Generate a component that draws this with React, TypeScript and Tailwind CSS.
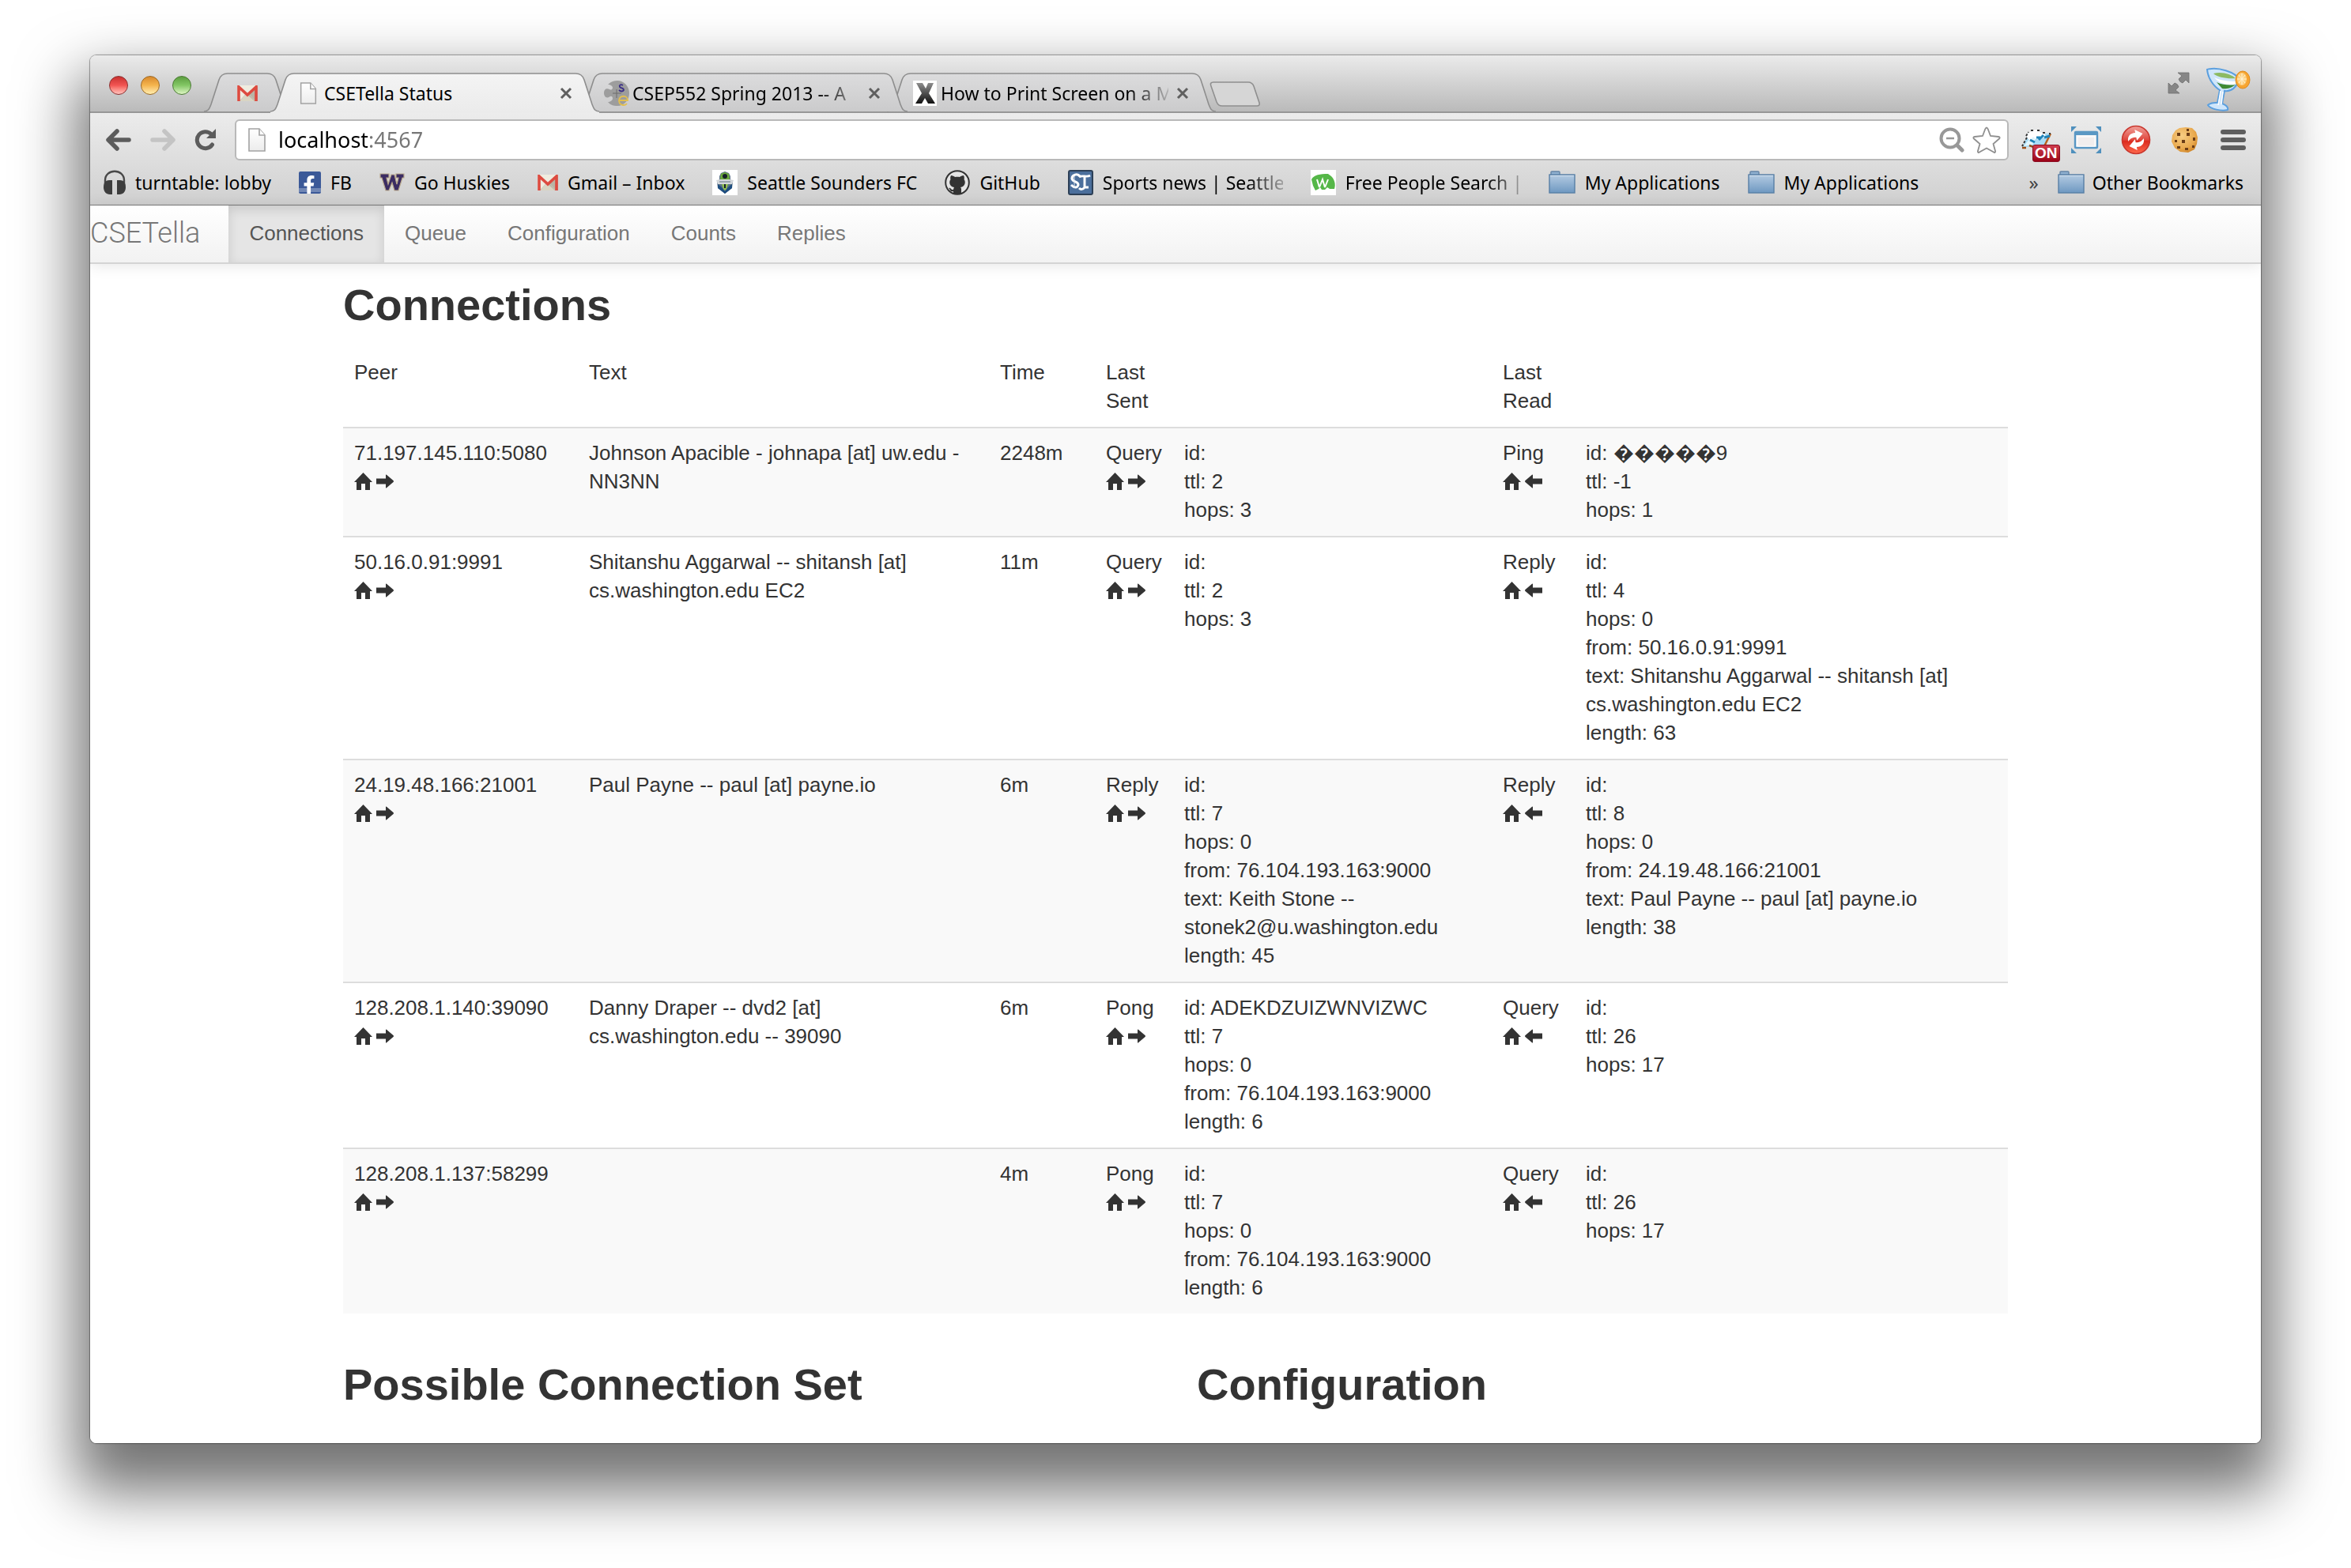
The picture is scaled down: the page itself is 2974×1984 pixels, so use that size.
import type { ReactNode } from "react";
import { FaFacebookF } from "react-icons/fa";

/* ---------- favicons and toolbar drawings ---------- */

function PageIcon({ className }: { className: string }) {
  return (
    <svg viewBox="0 0 22 30" className={className} aria-hidden="true">
      <defs>
        <linearGradient id="page" x1="0" y1="0" x2="0" y2="1">
          <stop offset="0" stopColor="#ffffff" />
          <stop offset="1" stopColor="#ececec" />
        </linearGradient>
      </defs>
      <path d="M1 1H14L21 9V29H1Z" fill="url(#page)" stroke="#a2a2a2" strokeWidth="1.6" />
      <path d="M14 1V9H21" fill="#fff" stroke="#a2a2a2" strokeWidth="1.6" />
    </svg>
  );
}

function GmailIcon() {
  return (
    <svg viewBox="0 0 26 20" className="h-5 w-[26px]" aria-hidden="true">
      <rect x="0" y="0" width="26" height="20" fill="#efece0" />
      <path d="M3 20L13 10L26 20Z" fill="#d9d5c3" />
      <path d="M13 12L26 1V20H22Z" fill="#b9b5a5" />
      <path d="M4 19L11 11M22 19L15 11" stroke="#c9c5b5" strokeWidth="1" />
      <path d="M2 20V2L13 12L24 2V20" fill="none" stroke="#dd4b40" strokeWidth="3.6" />
    </svg>
  );
}

function CseIcon() {
  return (
    <svg viewBox="0 0 32 32" className="size-8" aria-hidden="true">
      <path
        d="M5 5C9 1 13 0 17 0A15 16 0 0 1 17 32C12 32 8 31 5 27C8 27 11 25 11 22.500C11 20 9 19 7 20.500C3 23 0 20 0 15.500C0 11 3 9 7 11C9 12.500 11 11 11 9C11 7 8 5 5 5Z"
        fill="#9d9d9d"
      />
      <path d="M11 16H22M16 11V22" stroke="#6c6c6c" strokeWidth="1" />
      <path d="M24 6C21 4 19 6 20 8C21 10 25 9 25 12C24 14 21 14 19 12" fill="none" stroke="#3b2f86" strokeWidth="1.8" />
      <path d="M19 25H30C30 18 20 18 19 25C19 32 27 32 29 29" fill="none" stroke="#e3bf4f" strokeWidth="1.8" />
    </svg>
  );
}

function XIcon() {
  return (
    <svg viewBox="0 0 30 32" className="h-8 w-[30px]" aria-hidden="true">
      <defs>
        <linearGradient id="xg" x1="0" y1="0" x2="0" y2="1">
          <stop offset="0" stopColor="#8d8d8d" />
          <stop offset="1" stopColor="#111111" />
        </linearGradient>
      </defs>
      <rect width="30" height="32" fill="#fff" />
      <path d="M4 3H12L16 10L19 3H26L20 16L28 29H19L15 22L11 29H3L11 16Z" fill="url(#xg)" />
    </svg>
  );
}

function HeadphonesIcon() {
  return (
    <svg viewBox="0 0 28 32" className="h-8 w-7" aria-hidden="true">
      <path d="M2 20V13C2 -2 26 -2 26 13V20" fill="none" stroke="#474747" strokeWidth="2.4" />
      <path d="M11 13V31H8C3 31 0 27 0 22C0 16 3 13 7 13Z" fill="#3d3d3d" />
      <path d="M17 13V31H20C25 31 28 27 28 22C28 16 25 13 21 13Z" fill="#3d3d3d" />
    </svg>
  );
}

function FacebookIcon() {
  return (
    <span className="relative block size-7 overflow-hidden rounded-[2px] bg-[#3b5998]">
      <span className="absolute inset-x-0 bottom-[2px] h-[5px] bg-[#7187b5]" />
      <FaFacebookF className="absolute -bottom-px right-[3px] size-6 text-white" />
    </span>
  );
}

function HuskiesIcon() {
  return (
    <svg viewBox="0 0 32 24" className="h-6 w-8" aria-hidden="true">
      <path
        d="M1 1H12V6H9L11 14L15 2H19L22 14L24 6H21V1H31V6H29L24 22H19L16 12L12 22H8L3 6H1Z"
        fill="#3b2c63"
        stroke="#b9a98d"
        strokeWidth="1.2"
      />
    </svg>
  );
}

function SoundersIcon() {
  return (
    <svg viewBox="0 0 32 32" className="size-8" aria-hidden="true">
      <rect width="32" height="32" fill="#fff" />
      <path d="M11 4L16 2L21 4L23 8V12L26 15L25 23L16 30L7 23L6 15L9 12V8Z" fill="#5d7387" />
      <path d="M11 5L16 3L21 5L22 12H10Z" fill="#6cab3c" />
      <circle cx="16" cy="8" r="3" fill="#16202b" />
      <path d="M5 13L10 12H22L27 13L25 18H7Z" fill="#d3d7db" />
      <path d="M9 15H23" stroke="#8793a0" strokeWidth="1.5" />
      <path d="M7 18L12 22L16 27L20 22L25 18V23L16 30L7 23Z" fill="#1d4d80" />
      <path d="M12 18H20L18 24L16 26L14 24Z" fill="#8fbf4d" />
      <path d="M15 18H17V23H15Z" fill="#16202b" />
    </svg>
  );
}

function GithubIcon() {
  return (
    <svg viewBox="0 0 32 32" className="size-8" aria-hidden="true">
      <circle cx="16" cy="16" r="14.8" fill="#e4e4e4" stroke="#333" strokeWidth="2" />
      <path
        d="M8 7C10 7 12 8 13 9C15 8.500 17 8.500 19 9C20 8 22 7 24 7C25 9 25 11 24.500 12C27 15 26 21 20 22C21 23 21 24 21 25V30C18 31 14 31 11 30V27C8 28 7 26 6 24L5 23C8 22 8 26 11 25C11 24 11.500 23 12 22C6 21 5 15 7.500 12C7 11 7 9 8 7Z"
        fill="#333"
      />
    </svg>
  );
}

function SeattleTimesIcon() {
  return (
    <svg viewBox="0 0 32 32" className="size-8" aria-hidden="true">
      <rect x="1" y="1" width="30" height="30" rx="2" fill="#4b6f9c" stroke="#2c3f56" strokeWidth="2" />
      <path d="M15 8C12 4 5 6 5 11C6 16 13 14 13 19C12 23 8 23 4 19" fill="none" stroke="#fff" strokeWidth="3" />
      <path d="M14 9C18 6 23 10 28 7M21 9V22C19 25 16 25 14 23M21 22H26" fill="none" stroke="#fff" strokeWidth="3" />
      <path d="M8 8V23" stroke="#dfe7f0" strokeWidth="1" />
    </svg>
  );
}

function WhitepagesIcon() {
  return (
    <svg viewBox="0 0 32 32" className="size-8" aria-hidden="true">
      <rect width="32" height="32" fill="#fff" />
      <path d="M1 12C4 6 12 5 22 5L26 8C30 12 32 18 30 24L24 24L21 22L18 25H14L12 22L10 24L6 26L3 20Z" fill="#55b748" />
      <path d="M8 12L11 22M11 22L15 12L18 22M18 22L22 12" fill="none" stroke="#fff" strokeWidth="2" />
    </svg>
  );
}

function FolderIcon() {
  return (
    <svg viewBox="0 0 34 36" className="h-9 w-[34px]" aria-hidden="true">
      <defs>
        <linearGradient id="folder" x1="0" y1="0" x2="0" y2="1">
          <stop offset="0" stopColor="#b4cbe2" />
          <stop offset="1" stopColor="#6e98c1" />
        </linearGradient>
      </defs>
      <path d="M3 8V5Q3 4 4 4H13Q14 4 14 5V8" fill="#8fb0d0" stroke="#6485a6" strokeWidth="1.4" />
      <rect x="1" y="8" width="32" height="23" fill="url(#folder)" stroke="#587fa5" strokeWidth="1.4" />
      <path d="M2 9.500H32" stroke="#d3e1ef" strokeWidth="1" />
    </svg>
  );
}

function BackArrow({ className }: { className: string }) {
  return (
    <svg viewBox="0 0 32 28" className={className} aria-hidden="true">
      <path d="M14 3L3 14L14 25M4 14H29" fill="none" stroke="currentColor" strokeWidth="5.500" strokeLinecap="round" strokeLinejoin="round" />
    </svg>
  );
}

function ReloadIcon() {
  return (
    <svg viewBox="0 0 28 28" className="size-7" aria-hidden="true">
      <path d="M22.500 20A10.500 10.500 0 1 1 21 6.500" fill="none" stroke="#5c5c5c" strokeWidth="5" strokeLinecap="round" />
      <path d="M27 0V12H15Z" fill="#5c5c5c" />
    </svg>
  );
}

function ZoomOutIcon() {
  return (
    <svg viewBox="0 0 32 32" className="size-8" aria-hidden="true">
      <circle cx="14" cy="14" r="11.500" fill="none" stroke="#989898" strokeWidth="4" />
      <path d="M9 14H19" stroke="#989898" strokeWidth="2.400" />
      <path d="M23 23L29 29" stroke="#989898" strokeWidth="5" strokeLinecap="round" />
    </svg>
  );
}

function StarIcon() {
  return (
    <svg viewBox="0 0 36 34" className="h-[34px] w-9" aria-hidden="true">
      <path
        d="M18 1.500C19 1.500 19.500 3 20 4L23 12L33 13C35 13.200 35 14.500 34 15.500L26.500 22L29 31C29.500 33 28 33.500 27 32.500L18 27.500L9 32.500C8 33.500 6.500 33 7 31L9.500 22L2 15.500C1 14.500 1 13.200 3 13L13 12L16 4C16.500 3 17 1.500 18 1.500Z"
        fill="#fff"
        stroke="#8f8f8f"
        strokeWidth="1.800"
      />
    </svg>
  );
}

function CloudBookIcon() {
  return (
    <svg viewBox="0 0 38 28" className="h-7 w-[38px]" aria-hidden="true">
      <path d="M9 5L37 6L28 24H20L14 22L1 24Z" fill="#a9dcf5" />
      <path d="M11 12L19 11L14 20L3 22Z" fill="#e3f6fd" />
      <path d="M37 6L28 24" stroke="#b7611d" strokeWidth="2.500" />
      <path d="M1 24H6M10 21L18 24H28" fill="none" stroke="#9b4d17" strokeWidth="2.500" strokeDasharray="6 3" />
      <path d="M7 11C7 5 12 3 14 3C17 0 22 1 24 5C29 4 31 7 30 10L22 14L15 11L10 14Z" fill="#fff" />
      <path d="M7 11L1 22M6 9L9 4M12 2H15M20 2H23M27 5H30M35 6H37" stroke="#333" strokeWidth="2" strokeDasharray="3 2" />
      <path d="M11 14L17 17M22 14L28 8M19 11H24M29 11L36 9" stroke="#1f83b8" strokeWidth="3" />
    </svg>
  );
}

function WindowCaptureIcon() {
  return (
    <svg viewBox="0 0 38 34" className="h-[34px] w-[38px]" aria-hidden="true">
      <path d="M0 0H7L0 7ZM38 0H31L38 7ZM0 34H7L0 27ZM38 34H31L38 27Z" fill="#4f90bd" />
      <rect x="5" y="7" width="28" height="20" rx="1" fill="#f5f5f5" stroke="#5796c4" strokeWidth="2.400" />
      <path d="M5 6H33V11H5Z" fill="#5b98c4" />
      <rect x="8" y="13" width="22" height="12" fill="#f1eeee" stroke="#fff" strokeWidth="1" />
    </svg>
  );
}

function SyncBallIcon() {
  return (
    <svg viewBox="0 0 38 38" className="size-[38px]" aria-hidden="true">
      <defs>
        <linearGradient id="ball" x1="0" y1="0" x2="0" y2="1">
          <stop offset="0" stopColor="#f0a19b" />
          <stop offset="0.500" stopColor="#e0473d" />
          <stop offset="0.550" stopColor="#dc2b1f" />
          <stop offset="1" stopColor="#ff6a4d" />
        </linearGradient>
      </defs>
      <circle cx="19" cy="19" r="17.500" fill="url(#ball)" stroke="#c9372e" strokeWidth="1.600" />
      <g transform="rotate(-12 19 19)" fill="#fff">
        <path d="M9 19C9 12 14 9 20 10V6L29 13L20 20V16C15 15 12 16 9 19Z" />
        <path d="M29 19C29 26 24 29 18 28V32L9 25L18 18V22C23 23 26 22 29 19Z" />
      </g>
    </svg>
  );
}

function CookieIcon() {
  return (
    <svg viewBox="0 0 38 34" className="h-[34px] w-[38px]" aria-hidden="true">
      <defs>
        <radialGradient id="cookie" cx="0.400" cy="0.350" r="0.700">
          <stop offset="0" stopColor="#f7cd84" />
          <stop offset="0.700" stopColor="#e9a94e" />
          <stop offset="1" stopColor="#cf8426" />
        </radialGradient>
      </defs>
      <path d="M11 2L19 1L27 2L32 7L34 14L33 22L30 29L22 33L12 32L5 27L1 19L2 11L6 5Z" fill="url(#cookie)" />
      <g fill="#6b3d17">
        <rect x="8" y="8" width="4" height="4" />
        <rect x="20" y="3" width="3" height="3" />
        <rect x="20" y="8" width="4" height="4" />
        <rect x="14" y="17" width="4" height="4" />
        <rect x="28" y="14" width="3" height="4" />
        <rect x="5" y="17" width="3" height="3" />
        <rect x="8" y="25" width="4" height="3" />
        <rect x="18" y="27" width="4" height="3" />
        <rect x="27" y="24" width="3" height="3" />
      </g>
    </svg>
  );
}

function FullscreenIcon() {
  return (
    <svg viewBox="0 0 28 28" className="size-7" aria-hidden="true">
      <g fill="#868686" stroke="#6f6f6f" strokeWidth="0.800">
        <path d="M13 1H27V14L23 10L19 14Q15 13 14 9L18 5Z" />
        <path d="M1 14L5 18L9 14Q13 15 14 19L10 23L15 27H1Z" />
      </g>
    </svg>
  );
}

function CocktailIcon() {
  return (
    <svg viewBox="0 0 58 56" className="h-14 w-[58px]" aria-hidden="true">
      <path d="M2 3C15 -1 38 6 43 16C38 27 31 31 24 30L21 46C26 48 29 51 28 54C20 56 6 53 3 48C7 44 12 45 15 45L18 29C10 24 3 14 2 3Z" fill="#cfe6fb" stroke="#5b9fde" strokeWidth="2" />
      <path d="M10 8C20 5 33 9 38 14C28 15 15 13 10 8Z" fill="#8cba62" />
      <path d="M11 13C22 18 34 18 40 18L37 22C28 23 17 21 11 13Z" fill="#fff" />
      <path d="M14 19C22 23 32 23 38 22C32 27 25 28 21 27Z" fill="#3f8a34" />
      <path d="M19 30L16 48M22 31L20 47" stroke="#fff" strokeWidth="1.500" />
      <ellipse cx="47" cy="16" rx="9" ry="11" fill="#f7a531" stroke="#df8a1c" strokeWidth="1" />
      <ellipse cx="46" cy="15" rx="6" ry="8" fill="#fccf80" />
      <path d="M46 8V22M40 15H52M42 10L50 20M50 10L42 20" stroke="#fff3d6" strokeWidth="1" />
    </svg>
  );
}

/* ---------- tab strip ---------- */

function TabShape({ width, active }: { width: number; active?: boolean }) {
  const r = width;
  const outline = `M0 49C6 49 7 45 9 40L19 9C21 3 24 1 30 1H${r - 30}C${r - 24} 1 ${r - 21} 3 ${r - 19} 9L${r - 9} 40C${r - 7} 45 ${r - 6} 49 ${r} 49`;
  return (
    <svg viewBox={`0 0 ${width} 51`} className="absolute inset-0 size-full" preserveAspectRatio="none" aria-hidden="true">
      <defs>
        <linearGradient id="tab-on" x1="0" y1="0" x2="0" y2="1">
          <stop offset="0" stopColor="#f4f4f4" />
          <stop offset="1" stopColor="#ebebeb" />
        </linearGradient>
        <linearGradient id="tab-off" x1="0" y1="0" x2="0" y2="1">
          <stop offset="0" stopColor="#dcdcdd" />
          <stop offset="1" stopColor="#cbcbcc" />
        </linearGradient>
      </defs>
      <path d={active ? `${outline}V51H0Z` : outline} fill={active ? "url(#tab-on)" : "url(#tab-off)"} />
      <path d={outline} fill="none" stroke="#8d8d8d" strokeWidth="1.600" />
    </svg>
  );
}

function Tab({ icon, title, active, fade, z }: { icon: ReactNode; title: string; active?: boolean; fade?: boolean; z: string }) {
  return (
    <div role="tab" aria-selected={!!active} className={`relative -ml-[26px] flex h-[51px] w-[416px] shrink-0 items-center pr-8 pl-8 ${z}`}>
      <TabShape width={416} active={active} />
      <span className="relative flex w-8 shrink-0 justify-center">{icon}</span>
      <span
        className={`relative ml-1 flex-1 overflow-hidden whitespace-nowrap text-[23px] leading-8 text-black ${fade ? "[mask-image:linear-gradient(to_right,#000_82%,rgba(0,0,0,0.15))]" : ""}`}
      >
        {title}
      </span>
      <button type="button" aria-label="Close tab" className="relative ml-2 size-5 shrink-0">
        <svg viewBox="0 0 20 20" className="size-5" aria-hidden="true">
          <path d="M4 4L16 16M16 4L4 16" stroke="#5f5f5f" strokeWidth="3" />
        </svg>
      </button>
    </div>
  );
}

function TabStrip() {
  return (
    <div className="flex h-[73px] items-end border-b-2 border-[#979797] bg-linear-to-b from-[#ebebeb] to-[#bababa]">
      <div className="flex gap-4 self-start pt-[26px] pl-6">
        <button type="button" aria-label="Close window" className="size-6 rounded-full border border-[#8c2f2f] bg-linear-to-b from-[#c9302f] via-[#f25553] to-[#ffc3bf]" />
        <button type="button" aria-label="Minimise window" className="size-6 rounded-full border border-[#9c6a25] bg-linear-to-b from-[#d98a2c] via-[#f5b54e] to-[#ffefb0]" />
        <button type="button" aria-label="Zoom window" className="size-6 rounded-full border border-[#4a7a33] bg-linear-to-b from-[#5c9e3f] via-[#83c765] to-[#def5c4]" />
      </div>
      <div role="tablist" className="-mb-0.5 ml-4 flex">
        <div role="tab" aria-label="Gmail" aria-selected="false" className="relative z-10 flex h-[51px] w-[110px] shrink-0 items-center justify-center">
          <TabShape width={110} />
          <span className="relative">
            <GmailIcon />
          </span>
        </div>
        <Tab icon={<PageIcon className="h-7 w-[22px]" />} title="CSETella Status" active z="z-40" />
        <Tab icon={<CseIcon />} title="CSEP552 Spring 2013 -- A" fade z="z-30" />
        <Tab icon={<XIcon />} title="How to Print Screen on a M" fade z="z-20" />
      </div>
      <button type="button" aria-label="New tab" className="mb-1.5 -ml-2 h-8 w-16">
        <svg viewBox="0 0 64 32" className="h-8 w-16" aria-hidden="true">
          <path d="M5 1H49Q54 1 56 6L63 27Q64 31 60 31H16Q11 31 9 26L2 6Q0 1 5 1Z" fill="#d6d6d6" stroke="#8f8f8f" strokeWidth="1.600" />
        </svg>
      </button>
      <div className="ml-auto flex items-start gap-5 self-start pt-[15px] pr-3">
        <button type="button" aria-label="Full screen" className="mt-1.5 size-7">
          <FullscreenIcon />
        </button>
        <CocktailIcon />
      </div>
    </div>
  );
}

/* ---------- toolbar and bookmarks ---------- */

function Toolbar() {
  return (
    <div className="flex items-center pt-2 pr-[19px] pl-5">
      <button type="button" aria-label="Back">
        <BackArrow className="h-7 w-8 text-[#5c5c5c]" />
      </button>
      <button type="button" aria-label="Forward" className="ml-6">
        <BackArrow className="h-7 w-8 rotate-180 text-[#c4c4c4]" />
      </button>
      <button type="button" aria-label="Reload" className="ml-6">
        <ReloadIcon />
      </button>
      <div className="ml-[23px] flex h-[52px] flex-1 items-center rounded-md border-2 border-[#b9b9b9] bg-white pr-2 pl-[15px]">
        <PageIcon className="h-[30px] w-[22px]" />
        <input
          type="text"
          aria-label="Address"
          defaultValue="localhost:4567"
          className="ml-4 h-10 flex-1 bg-[linear-gradient(to_right,#000_113px,#767676_113px)] bg-clip-text text-[27px] leading-10 text-transparent caret-black outline-none"
        />
        <button type="button" aria-label="Zoom out">
          <ZoomOutIcon />
        </button>
        <button type="button" aria-label="Bookmark this page" className="ml-2.5">
          <StarIcon />
        </button>
      </div>
      <div className="ml-4 flex items-center gap-[25px]">
        <button type="button" className="relative h-9 w-[38px]">
          <CloudBookIcon />
          <span className="absolute top-6 left-3.5 rounded-[3px] border border-[#8a0f24] bg-linear-to-b from-[#cf3a4c] to-[#9c0016] px-0.5 font-['Liberation_Sans',sans-serif] text-[19px] leading-5 font-bold text-white">
            ON
          </span>
        </button>
        <button type="button" aria-label="Window capture">
          <WindowCaptureIcon />
        </button>
        <button type="button" aria-label="Sync">
          <SyncBallIcon />
        </button>
        <button type="button" aria-label="Cookies">
          <CookieIcon />
        </button>
        <button type="button" aria-label="Menu" className="flex w-8 flex-col gap-1">
          <span className="h-[6px] w-full rounded-full bg-[#5e5e5e]" />
          <span className="h-[6px] w-full rounded-full bg-[#5e5e5e]" />
          <span className="h-[6px] w-full rounded-full bg-[#5e5e5e]" />
        </button>
      </div>
    </div>
  );
}

const bookmarks: { icon: ReactNode; label: string; clip?: string }[] = [
  { icon: <HeadphonesIcon />, label: "turntable: lobby" },
  { icon: <FacebookIcon />, label: "FB" },
  { icon: <HuskiesIcon />, label: "Go Huskies" },
  { icon: <GmailIcon />, label: "Gmail – Inbox" },
  { icon: <SoundersIcon />, label: "Seattle Sounders FC" },
  { icon: <GithubIcon />, label: "GitHub" },
  { icon: <SeattleTimesIcon />, label: "Sports news | Seattle", clip: "w-[228px]" },
  { icon: <WhitepagesIcon />, label: "Free People Search |", clip: "w-[222px]" },
  { icon: <FolderIcon />, label: "My Applications" },
  { icon: <FolderIcon />, label: "My Applications" },
];

function BookmarkBar() {
  return (
    <nav aria-label="Bookmarks" className="flex h-14 items-center pr-[22px] pl-[17px] text-[23px] leading-8 text-black">
      <div className="flex items-center gap-[35px]">
        {bookmarks.map((b, i) => (
          <a key={i} href="#" className="flex items-center gap-3 whitespace-nowrap">
            <span className="shrink-0">{b.icon}</span>
            <span className={b.clip ? `[mask-image:linear-gradient(to_right,#000_80%,rgba(0,0,0,0.25))] [mask-clip:no-clip] ${b.clip}` : ""}>{b.label}</span>
          </a>
        ))}
      </div>
      <button type="button" aria-label="More bookmarks" className="mr-6 ml-auto text-[24px] text-[#444]">
        »
      </button>
      <a href="#" className="flex items-center gap-2.5 whitespace-nowrap">
        <FolderIcon />
        Other Bookmarks
      </a>
    </nav>
  );
}

/* ---------- page ---------- */

const navLinks = ["Connections", "Queue", "Configuration", "Counts", "Replies"];

function Navbar() {
  return (
    <div className="flex h-[74px] border-b-2 border-[#d4d4d4] bg-linear-to-b from-white to-[#f2f2f2] shadow-[0_2px_18px_rgba(0,0,0,0.1)]">
      <a href="#" className="pr-9 font-['Roboto',sans-serif] text-[36px] leading-[70px] font-light text-[#777]">
        CSETella
      </a>
      {navLinks.map((label, i) => (
        <a
          key={label}
          href="#"
          className={
            i === 0
              ? "bg-[#e5e5e5] px-[26px] text-[26px] leading-[70px] text-[#555] shadow-[inset_0_5px_14px_rgba(0,0,0,0.125)]"
              : "px-[26px] text-[26px] leading-[70px] text-[#777]"
          }
        >
          {label}
        </a>
      ))}
    </div>
  );
}

type Message = { kind: string; lines: string[] };
type Connection = { peer: string; text: string; time: string; sent: Message; read: Message };

const connections: Connection[] = [
  {
    peer: "71.197.145.110:5080",
    text: "Johnson Apacible - johnapa [at] uw.edu - NN3NN",
    time: "2248m",
    sent: { kind: "Query", lines: ["id:", "ttl: 2", "hops: 3"] },
    read: { kind: "Ping", lines: ["id: \uFFFD\uFFFD\uFFFD\uFFFD\uFFFD9", "ttl: -1", "hops: 1"] },
  },
  {
    peer: "50.16.0.91:9991",
    text: "Shitanshu Aggarwal -- shitansh [at] cs.washington.edu EC2",
    time: "11m",
    sent: { kind: "Query", lines: ["id:", "ttl: 2", "hops: 3"] },
    read: {
      kind: "Reply",
      lines: ["id:", "ttl: 4", "hops: 0", "from: 50.16.0.91:9991", "text: Shitanshu Aggarwal -- shitansh [at] cs.washington.edu EC2", "length: 63"],
    },
  },
  {
    peer: "24.19.48.166:21001",
    text: "Paul Payne -- paul [at] payne.io",
    time: "6m",
    sent: {
      kind: "Reply",
      lines: ["id:", "ttl: 7", "hops: 0", "from: 76.104.193.163:9000", "text: Keith Stone -- stonek2@u.washington.edu", "length: 45"],
    },
    read: {
      kind: "Reply",
      lines: ["id:", "ttl: 8", "hops: 0", "from: 24.19.48.166:21001", "text: Paul Payne -- paul [at] payne.io", "length: 38"],
    },
  },
  {
    peer: "128.208.1.140:39090",
    text: "Danny Draper -- dvd2 [at] cs.washington.edu -- 39090",
    time: "6m",
    sent: { kind: "Pong", lines: ["id: ADEKDZUIZWNVIZWC", "ttl: 7", "hops: 0", "from: 76.104.193.163:9000", "length: 6"] },
    read: { kind: "Query", lines: ["id:", "ttl: 26", "hops: 17"] },
  },
  {
    peer: "128.208.1.137:58299",
    text: "",
    time: "4m",
    sent: { kind: "Pong", lines: ["id:", "ttl: 7", "hops: 0", "from: 76.104.193.163:9000", "length: 6"] },
    read: { kind: "Query", lines: ["id:", "ttl: 26", "hops: 17"] },
  },
];

function Direction({ inbound }: { inbound?: boolean }) {
  return (
    <span className="flex h-9 items-center gap-[5px]">
      <svg viewBox="0 0 23 22" className="h-[22px] w-[23px]" aria-hidden="true">
        <path d="M11.500 0L23 12H20V22H14V14H9V22H3V12H0Z" fill="#333" />
      </svg>
      <svg viewBox="0 0 22 18" className={inbound ? "h-[18px] w-[22px] rotate-180" : "h-[18px] w-[22px]"} aria-hidden="true">
        <path d="M0 5.500H12V1Q12 0 13 0.800L21.500 8Q22.500 9 21.500 10L13 17.200Q12 18 12 17V12.500H0Z" fill="#333" />
      </svg>
    </span>
  );
}

function Lines({ lines }: { lines: string[] }) {
  return (
    <>
      {lines.map((line) => (
        <div key={line}>{line}</div>
      ))}
    </>
  );
}

function ConnectionTable() {
  return (
    <table className="w-full table-fixed text-left align-top text-[26px] leading-9">
      <colgroup>
        <col className="w-[297px]" />
        <col className="w-[520px]" />
        <col className="w-[134px]" />
        <col className="w-[99px]" />
        <col className="w-[403px]" />
        <col className="w-[105px]" />
        <col />
      </colgroup>
      <thead>
        <tr className="align-top">
          <th className="px-3.5 pt-[13px] pb-[15px] font-normal">Peer</th>
          <th className="px-3.5 pt-[13px] pb-[15px] font-normal">Text</th>
          <th className="px-3.5 pt-[13px] pb-[15px] font-normal">Time</th>
          <th className="px-3.5 pt-[13px] pb-[15px] font-normal">Last Sent</th>
          <td />
          <th className="px-3.5 pt-[13px] pb-[15px] font-normal">Last Read</th>
          <td />
        </tr>
      </thead>
      <tbody>
        {connections.map((c) => (
          <tr key={c.peer} className="border-t-2 border-[#ddd] align-top odd:bg-[#f9f9f9]">
            <td className="px-3.5 pt-[13px] pb-[15px]">
              {c.peer}
              <Direction />
            </td>
            <td className="px-3.5 pt-[13px] pb-[15px]">{c.text}</td>
            <td className="px-3.5 pt-[13px] pb-[15px]">{c.time}</td>
            <td className="pt-[13px] pb-[15px] pl-3.5">
              {c.sent.kind}
              <Direction />
            </td>
            <td className="px-3.5 pt-[13px] pb-[15px]">
              <Lines lines={c.sent.lines} />
            </td>
            <td className="pt-[13px] pb-[15px] pl-3.5">
              {c.read.kind}
              <Direction inbound />
            </td>
            <td className="px-3.5 pt-[13px] pb-[15px]">
              <Lines lines={c.read.lines} />
            </td>
          </tr>
        ))}
      </tbody>
    </table>
  );
}

export default function App() {
  return (
    <div className="flex h-screen flex-col bg-white px-[114px] pt-[70px] pb-[158px]">
      <div className="flex flex-1 flex-col overflow-hidden rounded-lg bg-white shadow-[0_0_1px_1px_rgba(0,0,0,0.35),0_44px_74px_18px_rgba(0,0,0,0.55)]">
        <header className="font-['Noto_Sans',sans-serif]">
          <TabStrip />
          <div className="border-b border-[#7a7a7a] bg-linear-to-b from-[#ececec] to-[#d0d0d0]">
            <Toolbar />
            <BookmarkBar />
          </div>
        </header>
        <div className="flex-1 bg-white font-['Liberation_Sans',sans-serif] text-[#333]">
          <Navbar />
          <main className="mx-auto max-w-[2106px]">
            <h1 className="pt-4 pb-[18px] text-[56px] leading-[72px] font-bold">Connections</h1>
            <ConnectionTable />
            <div className="mt-[54px] grid grid-cols-2 gap-[54px] text-[56px] leading-[72px] font-bold">
              <h2>Possible Connection Set</h2>
              <h2>Configuration</h2>
            </div>
          </main>
        </div>
      </div>
    </div>
  );
}
